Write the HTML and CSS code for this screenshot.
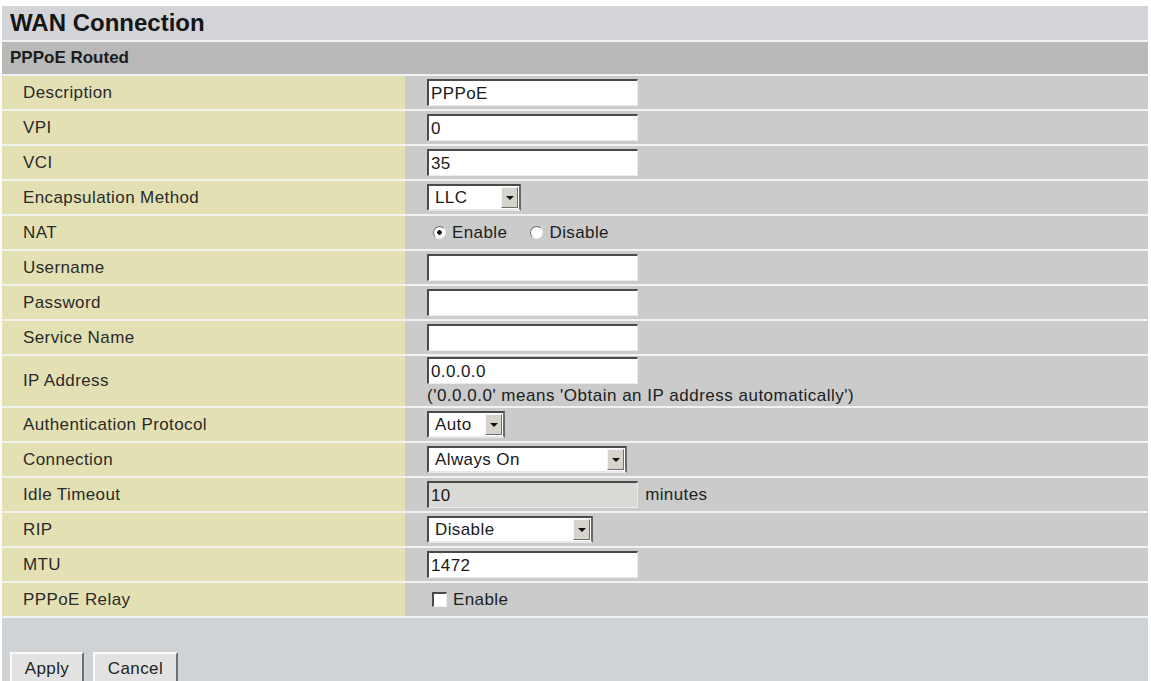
FILE: index.html
```html
<!DOCTYPE html>
<html lang="en">
<head>
    <meta charset="UTF-8">
    <title>WAN Connection</title>
    <link rel="stylesheet" href="styles.css">
</head>
<body>
    <div class="page">
        <div class="title">WAN Connection</div>
        <div class="subtitle">PPPoE Routed</div>

        <table class="form">
            <tr>
                <td class="label">Description</td>
                <td class="value"><input class="text" type="text" value="PPPoE"></td>
            </tr>
            <tr>
                <td class="label">VPI</td>
                <td class="value"><input class="text" type="text" value="0"></td>
            </tr>
            <tr>
                <td class="label">VCI</td>
                <td class="value"><input class="text" type="text" value="35"></td>
            </tr>
            <tr>
                <td class="label">Encapsulation Method</td>
                <td class="value">
                    <span class="dropdown w-llc">
                        <select><option>LLC</option><option>VC-Mux</option></select>
                        <span class="arrow"></span>
                    </span>
                </td>
            </tr>
            <tr>
                <td class="label">NAT</td>
                <td class="value">
                    <label class="choice"><input type="radio" name="nat" checked> Enable</label>
                    <label class="choice"><input type="radio" name="nat"> Disable</label>
                </td>
            </tr>
            <tr>
                <td class="label">Username</td>
                <td class="value"><input class="text" type="text" value=""></td>
            </tr>
            <tr>
                <td class="label">Password</td>
                <td class="value"><input class="text" type="password" value=""></td>
            </tr>
            <tr>
                <td class="label">Service Name</td>
                <td class="value"><input class="text" type="text" value=""></td>
            </tr>
            <tr class="tall">
                <td class="label">IP Address</td>
                <td class="value">
                    <input class="text" type="text" value="0.0.0.0">
                    <div class="hint">('0.0.0.0' means 'Obtain an IP address automatically')</div>
                </td>
            </tr>
            <tr>
                <td class="label">Authentication Protocol</td>
                <td class="value">
                    <span class="dropdown w-auth">
                        <select><option>Auto</option><option>CHAP</option><option>PAP</option></select>
                        <span class="arrow"></span>
                    </span>
                </td>
            </tr>
            <tr>
                <td class="label">Connection</td>
                <td class="value">
                    <span class="dropdown w-conn">
                        <select><option>Always On</option><option>Connect on Demand</option></select>
                        <span class="arrow"></span>
                    </span>
                </td>
            </tr>
            <tr>
                <td class="label">Idle Timeout</td>
                <td class="value">
                    <input class="text" type="text" value="10" disabled>
                    <span class="unit">minutes</span>
                </td>
            </tr>
            <tr>
                <td class="label">RIP</td>
                <td class="value">
                    <span class="dropdown w-rip">
                        <select><option>Disable</option><option>RIP1</option><option>RIP2</option></select>
                        <span class="arrow"></span>
                    </span>
                </td>
            </tr>
            <tr>
                <td class="label">MTU</td>
                <td class="value"><input class="text" type="text" value="1472"></td>
            </tr>
            <tr>
                <td class="label">PPPoE Relay</td>
                <td class="value">
                    <label class="choice"><input type="checkbox"> Enable</label>
                </td>
            </tr>
        </table>

        <div class="actions">
            <button>Apply</button>
            <button>Cancel</button>
        </div>
    </div>
</body>
</html>
```

FILE: styles.css
```css
body {
    margin: 0;
    padding: 0;
    background: #ffffff;
    font-family: 'Liberation Sans', Arial, sans-serif;
    color: #222;
}

.page {
    width: 1146px;
    margin: 6px 0 0 2px;
    background: #cfd3d5;
    height: 675px;
}

.title {
    height: 34px;
    line-height: 34px;
    padding-left: 8px;
    background: #d2d4d7;
    border-bottom: 2px solid #f2f2f2;
    font-size: 24px;
    font-weight: bold;
    color: #151515;
}

.subtitle {
    height: 32px;
    line-height: 32px;
    padding-left: 8px;
    background: #b9b9b9;
    font-size: 17px;
    font-weight: bold;
    color: #1c1c1c;
}

.form {
    width: 100%;
    border-collapse: separate;
    border-spacing: 0 2px;
    background: #f2f2f2;
    font-size: 17px;
    letter-spacing: 0.4px;
}

.form tr {
    height: 33px;
}

.form tr.tall {
    height: 50px;
}

.form td {
    padding: 0;
    vertical-align: middle;
}

.label {
    width: 382px;
    padding-left: 21px !important;
    background: #e3e1b4;
    color: #2a2a2a;
}

.value {
    padding-left: 22px !important;
    background: #cbcbcb;
}

input.text {
    box-sizing: border-box;
    width: 211px;
    height: 27px;
    margin: 0;
    padding: 1px 2px 0;
    border-top: 2px solid #4a4a4a;
    border-left: 2px solid #4a4a4a;
    border-right: 1px solid #ececec;
    border-bottom: 1px solid #ececec;
    background: #ffffff;
    font-family: 'Liberation Sans', Arial, sans-serif;
    font-size: 17px;
    letter-spacing: 0.4px;
    color: #1a1a1a;
    vertical-align: middle;
}

input.text:disabled {
    background: #d9d9d6;
    color: #1a1a1a;
}

.hint {
    margin-top: 3px;
    font-size: 17px;
    letter-spacing: 0.5px;
    color: #202020;
    line-height: 18px;
}

.unit {
    margin-left: 2px;
    vertical-align: middle;
}

.dropdown {
    position: relative;
    display: inline-block;
    height: 27px;
    vertical-align: middle;
}

.dropdown select {
    appearance: none;
    -webkit-appearance: none;
    box-sizing: border-box;
    width: 100%;
    height: 27px;
    margin: 0;
    padding: 0 20px 0 6px;
    border-top: 2px solid #4a4a4a;
    border-left: 2px solid #4a4a4a;
    border-right: 2px solid #6a6a6a;
    border-bottom: 2px solid #e8e8e8;
    border-radius: 0;
    background: #ffffff;
    font-family: 'Liberation Sans', Arial, sans-serif;
    font-size: 17px;
    letter-spacing: 0.4px;
    color: #1a1a1a;
}

.dropdown .arrow {
    position: absolute;
    top: 3px;
    right: 3px;
    box-sizing: border-box;
    width: 17px;
    height: 21px;
    background: #d6d3cc;
    border-top: 1px solid #f5f5f5;
    border-left: 1px solid #f5f5f5;
    border-right: 1px solid #707070;
    border-bottom: 1px solid #707070;
    pointer-events: none;
}

.dropdown .arrow::after {
    content: '';
    position: absolute;
    left: 4px;
    top: 8px;
    border-left: 4px solid transparent;
    border-right: 4px solid transparent;
    border-top: 4px solid #111;
}

.w-llc { width: 94px; }
.w-auth { width: 78px; }
.w-conn { width: 200px; }
.w-rip { width: 166px; }

.choice {
    display: inline-flex;
    align-items: center;
    gap: 6px;
    margin-right: 12px;
    font-size: 17px;
    color: #1e1e1e;
    vertical-align: middle;
}

.choice input[type="radio"] {
    appearance: none;
    -webkit-appearance: none;
    width: 13px;
    height: 13px;
    margin: 0 0 0 6px;
    border-radius: 50%;
    border-top: 1px solid #707070;
    border-left: 1px solid #707070;
    border-right: 1px solid #f0f0f0;
    border-bottom: 1px solid #f0f0f0;
    background: #ffffff;
}

.choice input[type="radio"]:checked {
    background: radial-gradient(circle, #111 0 2px, #ffffff 2.5px);
}

.choice input[type="checkbox"] {
    appearance: none;
    -webkit-appearance: none;
    width: 15px;
    height: 15px;
    margin: 0 0 0 5px;
    border-top: 2px solid #4a4a4a;
    border-left: 2px solid #4a4a4a;
    border-right: 1px solid #f0f0f0;
    border-bottom: 1px solid #f0f0f0;
    background: #ffffff;
}

.actions {
    padding: 34px 0 0 8px;
    display: flex;
    gap: 9px;
}

.actions button {
    height: 34px;
    padding: 0 12px;
    background: #e2e2e2;
    border-top: 2px solid #fbfbfb;
    border-left: 2px solid #fbfbfb;
    border-right: 2px solid #6e6e6e;
    border-bottom: 2px solid #6e6e6e;
    font-family: 'Liberation Sans', Arial, sans-serif;
    font-size: 17px;
    letter-spacing: 0.4px;
    color: #222;
}

.actions button:first-child {
    width: 74px;
}

.actions button:last-child {
    width: 85px;
}
```
